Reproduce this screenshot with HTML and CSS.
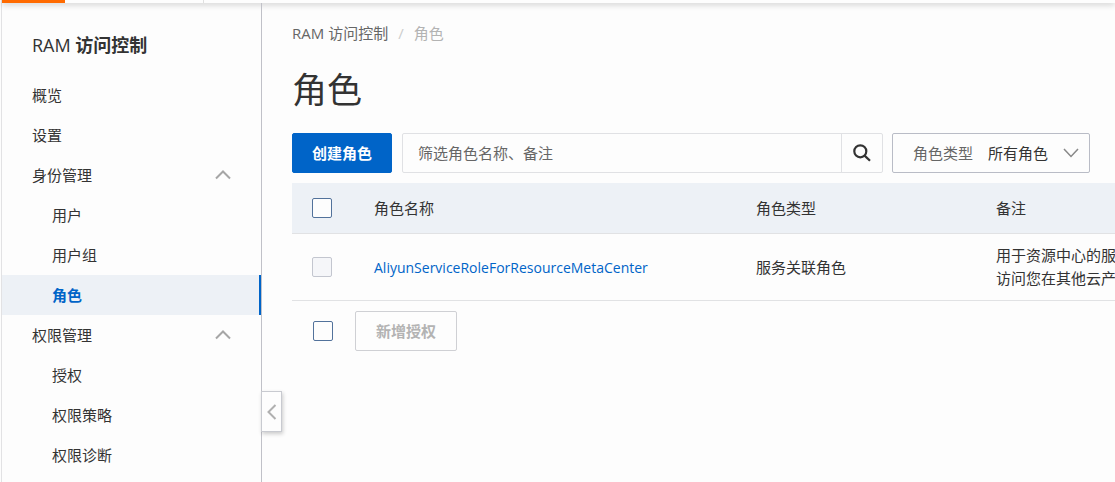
FILE: index.html
```html
<!DOCTYPE html>
<html lang="zh-CN">
<head>
<meta charset="utf-8">
<title>RAM 访问控制</title>
<link rel="stylesheet" href="styles.css">
</head>
<body>
<div class="app">
  <header class="topbar"><span class="topbar-logo"></span><span class="topbar-menu"></span></header>
  <div class="layout">
    <nav class="sidebar">
      <h2 class="sidebar-title"><span class="sidebar-product">RAM</span> 访问控制</h2>
      <a class="nav-item" href="#overview">概览</a>
      <a class="nav-item" href="#settings">设置</a>
      <button class="nav-item nav-group" type="button" aria-expanded="true">身份管理
        <svg class="nav-arrow" viewBox="0 0 16 10"><path d="M1 8.5 8 1.5l7 7"/></svg>
      </button>
      <a class="nav-item nav-sub" href="#users">用户</a>
      <a class="nav-item nav-sub" href="#groups">用户组</a>
      <a class="nav-item nav-sub nav-active" href="#roles">角色</a>
      <button class="nav-item nav-group" type="button" aria-expanded="true">权限管理
        <svg class="nav-arrow" viewBox="0 0 16 10"><path d="M1 8.5 8 1.5l7 7"/></svg>
      </button>
      <a class="nav-item nav-sub" href="#grants">授权</a>
      <a class="nav-item nav-sub" href="#policies">权限策略</a>
      <a class="nav-item nav-sub" href="#diagnosis">权限诊断</a>
      <button class="collapse" type="button" aria-label="收起">
        <svg class="collapse-arrow" viewBox="0 0 10 16"><path d="M8.5 1 1.5 8l7 7"/></svg>
      </button>
    </nav>
    <main class="content">
      <div class="breadcrumb"><a class="crumb" href="#ram">RAM 访问控制</a><span class="crumb-sep">/</span><span class="crumb-current">角色</span></div>
      <h1 class="page-title">角色</h1>
      <div class="toolbar">
        <button class="btn btn-primary" type="button">创建角色</button>
        <div class="search">
          <input class="search-input" type="text" placeholder="筛选角色名称、备注" aria-label="筛选角色名称、备注">
          <button class="search-btn" type="button" aria-label="搜索">
            <svg class="search-icon" viewBox="0 0 18 18"><circle cx="7.3" cy="7.3" r="6"/><path d="m11.6 11.6 5.4 5.2"/></svg>
          </button>
        </div>
        <div class="filter">
          <label class="filter-label" for="role-type">角色类型</label>
          <select class="filter-select" id="role-type"><option>所有角色</option></select>
          <svg class="filter-arrow" viewBox="0 0 16 10"><path d="m1 1 7 7.5L15 1"/></svg>
        </div>
      </div>
      <div class="table-wrap">
        <table class="table">
          <colgroup><col class="col-check"><col class="col-name"><col class="col-type"><col class="col-note"></colgroup>
          <thead>
            <tr><th><input class="check" type="checkbox" aria-label="全选"></th><th>角色名称</th><th>角色类型</th><th>备注</th></tr>
          </thead>
          <tbody>
            <tr>
              <td><input class="check" type="checkbox" aria-label="选择角色" disabled></td>
              <td><a class="role-link" href="#role">AliyunServiceRoleForResourceMetaCenter</a></td>
              <td>服务关联角色</td>
              <td>用于资源中心的服<br>访问您在其他云产</td>
            </tr>
          </tbody>
        </table>
      </div>
      <div class="batch">
        <input class="check" type="checkbox" aria-label="全选">
        <button class="btn btn-disabled" type="button" disabled>新增授权</button>
      </div>
    </main>
  </div>
</div>
</body>
</html>
```
FILE: styles.css
```css
* { box-sizing: border-box; }
body, button, input, select {
  font-family: "Open Sans", "Noto Sans CJK SC", sans-serif;
  font-size: 15px;
  color: #333;
}
body { margin: 0; background: #fdfdfd; line-height: 23px; overflow: hidden; }
a { color: inherit; text-decoration: none; }
button { cursor: pointer; }
svg { fill: none; stroke: currentColor; flex: none; }

.app { display: flex; flex-direction: column; min-height: 100vh; margin-left: 1px; border-left: 1px solid #e2e2e4; }
.topbar { display: flex; height: 3px; box-shadow: 0 1px 6px rgba(0, 0, 0, 0.3); }
.topbar-logo { width: 63px; background: #ff6a00; }
.topbar-menu { width: 139px; border-right: 1px solid #e0e0e0; }
.layout { display: flex; flex: 1; }

.sidebar { position: relative; flex: none; width: 260px; padding-top: 22px; border-right: 1px solid #c0c1c8; }
.sidebar-title { margin: 0 0 10px; padding-left: 30px; font-size: 18px; line-height: 40px; font-weight: 700; }
.sidebar-product { font-weight: 500; }
.nav-item { display: flex; align-items: center; width: 100%; height: 40px; padding: 0 30px; border: 0; background: none; line-height: 22px; }
.nav-group { justify-content: space-between; }
.nav-sub { padding-left: 50px; }
.nav-active { background: #edf1f6; color: #0064c8; font-weight: 700; border-right: 2px solid #0064c8; }
.nav-arrow { width: 16px; height: 10px; color: #a6a6a6; stroke-width: 2; }
.collapse {
  position: absolute; left: 100%; top: 388px;
  display: flex; align-items: center; justify-content: center;
  width: 21px; height: 41px; padding: 0;
  border: 1px solid #c8cad0; background: #fdfdfd; color: #b0b0b0;
  box-shadow: 1px 2px 4px rgba(0, 0, 0, 0.2);
}
.collapse-arrow { width: 10px; height: 16px; stroke-width: 2; }

.content { flex: 1; min-width: 0; padding: 19px 0 0 30px; }
.breadcrumb { display: flex; color: #666; }
.crumb-sep { margin: 0 10px; color: #ccc; }
.crumb-current { color: #b3b3b3; }
.page-title { margin: 19px 0 17px; font-size: 35px; line-height: 52px; font-weight: 400; }
.toolbar { display: flex; height: 40px; padding-right: 25px; }
.btn { height: 40px; padding: 0 19px; border: 1px solid; border-radius: 2px; font-weight: 700; line-height: 22px; }
.btn-primary { background: #0064c8; border-color: #0064c8; color: #fff; }
.btn-disabled { padding: 0 20px; background: #fdfdfd; border-color: #cfd0d4; color: #b3b3b3; }
.search { display: flex; flex: 1; margin: 0 9px 0 10px; border: 1px solid #e0e1e4; border-radius: 2px; }
.search-input { flex: 1; min-width: 0; padding: 0 15px; border: 0; background: none; }
.search-input::placeholder { color: #666; opacity: 1; }
.search-btn { display: flex; align-items: center; justify-content: center; width: 41px; padding: 0; border: 0; border-left: 1px solid #e0e1e4; background: none; }
.search-icon { width: 18px; height: 18px; stroke-width: 2.2; }
.filter { display: flex; align-items: center; width: 198px; padding: 0 10px 0 20px; border: 1px solid #b9bcc6; border-radius: 2px; }
.filter-label { color: #666; margin-right: 15px; }
.filter-select { flex: 1; min-width: 0; height: 38px; padding: 0; border: 0; background: none; appearance: none; }
.filter-arrow { width: 16px; height: 10px; color: #888; stroke-width: 1.5; }

.table-wrap { margin-top: 10px; overflow: hidden; }
.table { width: 1100px; border-collapse: separate; border-spacing: 0; table-layout: fixed; }
.col-check { width: 62px; }
.col-name { width: 382px; }
.col-type { width: 240px; }
.table th, .table td { padding: 10px 0 10px 20px; border-bottom: 1px solid #e1e2e4; text-align: left; font-weight: 400; }
.table th { height: 51px; background: #edf1f6; }
.check {
  appearance: none; display: block; width: 20px; height: 20px; margin: 0;
  border: 1px solid #52729b; border-radius: 2px; background: #fdfdfd;
}
.check:disabled { border-color: #c3c6cf; background: #f5f6f9; }
.role-link { color: #0064c8; font-size: 14px; }
.batch { display: flex; align-items: center; gap: 22px; padding: 10px 0 0 21px; }
```
